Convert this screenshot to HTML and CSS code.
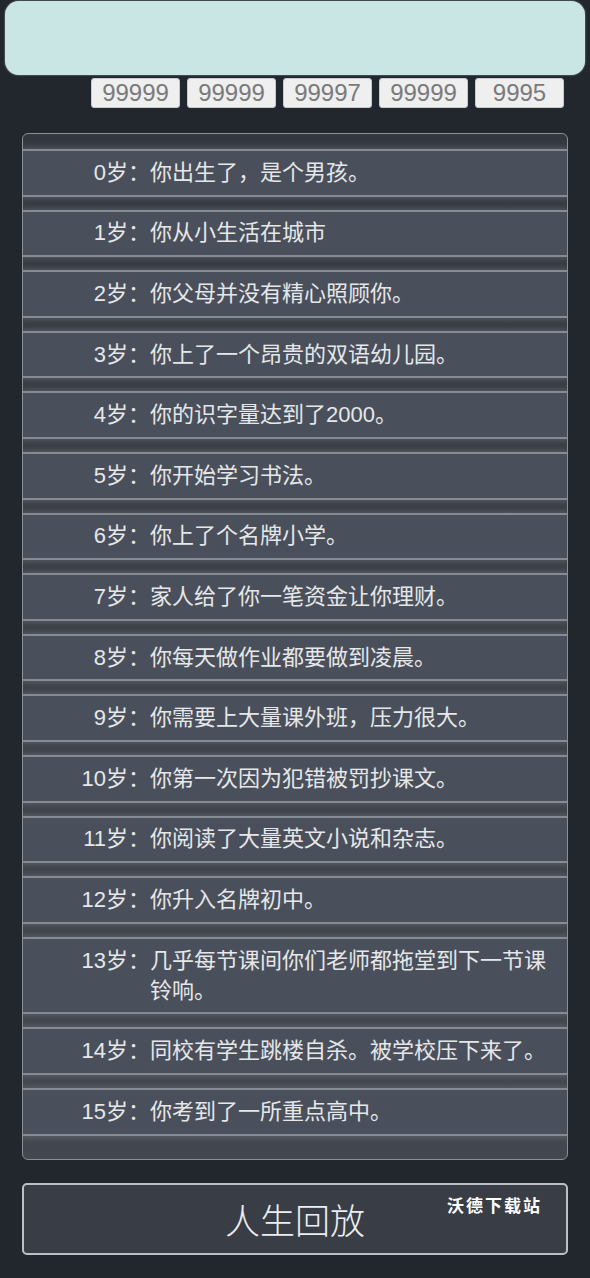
FILE: index.html
```html
<!doctype html>
<html lang="zh-CN">
	<head>
	<meta charset="utf-8">
	<title>人生重开</title>
	<link rel="stylesheet" href="styles.css">
	</head>
	<body>

		<div class="banner"></div>

		<div class="stats">
			<input class="stat" type="text" value="99999">
			<input class="stat" type="text" value="99999">
			<input class="stat" type="text" value="99997">
			<input class="stat" type="text" value="99999">
			<input class="stat" type="text" value="9995">
		</div>

		<ul class="life">
			<li class="row"><span class="age">0岁：</span><span class="event">你出生了，是个男孩。</span></li>
			<li class="row"><span class="age">1岁：</span><span class="event">你从小生活在城市</span></li>
			<li class="row"><span class="age">2岁：</span><span class="event">你父母并没有精心照顾你。</span></li>
			<li class="row"><span class="age">3岁：</span><span class="event">你上了一个昂贵的双语幼儿园。</span></li>
			<li class="row"><span class="age">4岁：</span><span class="event">你的识字量达到了2000。</span></li>
			<li class="row"><span class="age">5岁：</span><span class="event">你开始学习书法。</span></li>
			<li class="row"><span class="age">6岁：</span><span class="event">你上了个名牌小学。</span></li>
			<li class="row"><span class="age">7岁：</span><span class="event">家人给了你一笔资金让你理财。</span></li>
			<li class="row"><span class="age">8岁：</span><span class="event">你每天做作业都要做到凌晨。</span></li>
			<li class="row"><span class="age">9岁：</span><span class="event">你需要上大量课外班，压力很大。</span></li>
			<li class="row"><span class="age">10岁：</span><span class="event">你第一次因为犯错被罚抄课文。</span></li>
			<li class="row"><span class="age">11岁：</span><span class="event">你阅读了大量英文小说和杂志。</span></li>
			<li class="row"><span class="age">12岁：</span><span class="event">你升入名牌初中。</span></li>
			<li class="row"><span class="age">13岁：</span><span class="event">几乎每节课间你们老师都拖堂到下一节课铃响。</span></li>
			<li class="row"><span class="age">14岁：</span><span class="event">同校有学生跳楼自杀。被学校压下来了。</span></li>
			<li class="row"><span class="age">15岁：</span><span class="event">你考到了一所重点高中。</span></li>
		</ul>

		<button class="replay" type="button">人生回放<span class="mark">沃德下载站</span></button>

	</body>
</html>
```

FILE: styles.css
```css
html, body {
	margin: 0;
	padding: 0;
}

body {
	background-color: #22262d;
	font-family: "Liberation Sans", "Noto Sans CJK SC", sans-serif;
	color: #e6e7e9;
	padding-bottom: 20px;
}

.banner {
	margin: 1px 5px 0;
	height: 74px;
	border-radius: 14px;
	background-color: #c9e6e5;
	box-shadow: 0 0 2px 0 rgba(201, 230, 229, 0.7);
}

.stats {
	display: flex;
	justify-content: flex-end;
	gap: 7px;
	margin-top: 3px;
	padding-right: 26px;
}

.stat {
	box-sizing: border-box;
	width: 89px;
	height: 30px;
	margin: 0;
	padding: 0;
	border: 1px solid #c9c9c9;
	border-radius: 3px;
	background-color: #efefef;
	color: #7a7a7a;
	font-family: "Liberation Sans", sans-serif;
	font-size: 24px;
	text-align: center;
}

.life {
	list-style: none;
	margin: 25px 22px 0;
	padding: 15px 0 23px;
	border: 1px solid #8b9097;
	border-radius: 6px;
	background: linear-gradient(#33373f, #43474f);
	overflow: hidden;
}

.row {
	display: flex;
	padding: 6.8px 10px 6.8px 0;
	border-top: 2px solid #868b93;
	border-bottom: 2px solid #868b93;
	background-color: #4a505b;
	font-size: 22px;
	line-height: 30px;
	box-shadow: 0 0 6px 2px rgba(115, 120, 127, 0.5);
}

.row + .row {
	margin-top: 13px;
}

.age {
	flex: none;
	width: 127px;
	text-align: right;
}

.event {
	flex: 1;
}

.replay {
	position: relative;
	display: block;
	box-sizing: border-box;
	width: 546px;
	height: 72px;
	margin: 23px 22px 0;
	padding: 0;
	border: 2px solid #bcc0c5;
	border-radius: 5px;
	background-color: #393d46;
	color: #eceef0;
	font-family: "Noto Sans CJK SC", sans-serif;
	font-size: 35px;
	font-weight: 300;
	line-height: 68px;
	text-align: center;
}

.mark {
	position: absolute;
	top: 5px;
	right: 24px;
	font-size: 17px;
	font-weight: 700;
	letter-spacing: 2px;
	line-height: 30px;
	color: #ffffff;
}
```
